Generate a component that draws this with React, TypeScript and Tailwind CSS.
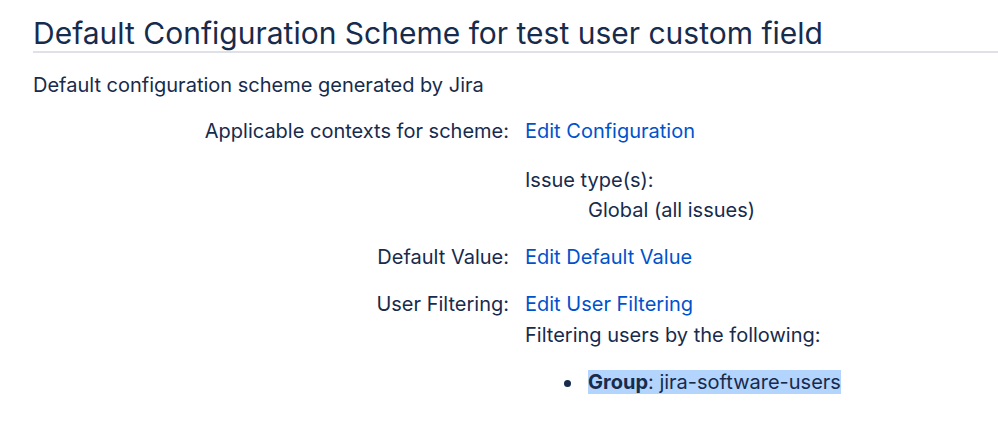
export default function App() {
  return (
    <div
      className="min-h-[441px] w-[998px] bg-white pl-[33px] pt-[15px] text-[#172B4D]"
      style={{ fontFamily: "Inter, 'Noto Sans', sans-serif" }}
    >
      {/* Header */}
      <h2 className="border-b-2 border-[#dfe1e6] text-[30px] leading-[36px] font-normal">
        Default Configuration Scheme for test user custom field
      </h2>
      <p className="mt-[18px] text-[20px] leading-[28px]">Default configuration scheme generated by Jira</p>

      {/* Scheme details */}
      <div className="mt-[18px] grid grid-cols-[476px_1fr] gap-x-[16px] text-[20px] leading-[28px]">
        <div className="text-right">Applicable contexts for scheme:</div>
        <div>
          <a href="#" className="text-[#0052CC]">Edit Configuration</a>
          <div className="mt-[21px]">Issue type(s):</div>
          <div className="pl-[63px] pt-[1px] leading-[30px]">Global (all issues)</div>
        </div>

        <div className="mt-[18px] text-right">Default Value:</div>
        <div className="mt-[18px]">
          <a href="#" className="text-[#0052CC]">Edit Default Value</a>
        </div>

        <div className="mt-[19px] text-right">User Filtering:</div>
        <div className="mt-[19px]">
          <a href="#" className="text-[#0052CC]">Edit User Filtering</a>
          <div className="mt-[3px]">Filtering users by the following:</div>
          <ul className="mt-[19px] pl-[63px]">
            <li className="relative">
              <span className="absolute left-[-24px] top-[12px] h-[7px] w-[7px] rounded-full bg-[#172B4D]" />
              <span className="bg-[#b3d4fd]">
                <strong className="font-bold">Group</strong>: jira-software-users
              </span>
            </li>
          </ul>
        </div>
      </div>
    </div>
  );
}
